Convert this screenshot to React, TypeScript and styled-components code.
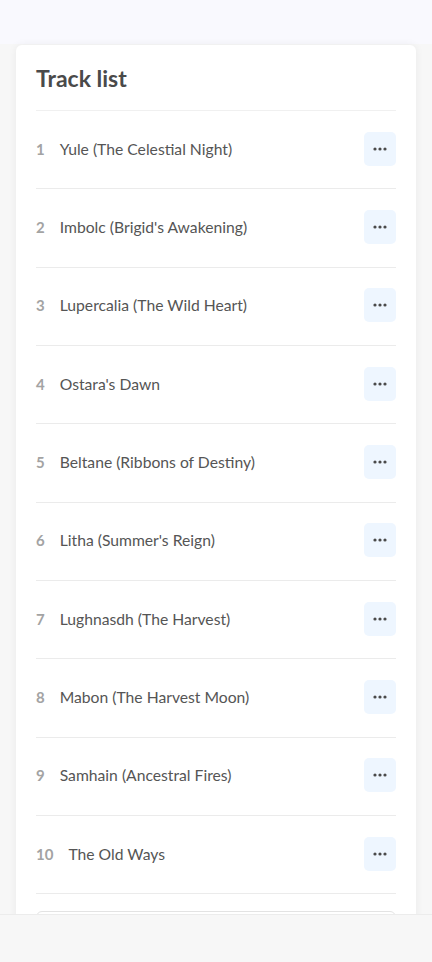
import React from 'react';
import styled, {createGlobalStyle} from "styled-components";

const tracks = [
	"Yule (The Celestial Night)",
	"Imbolc (Brigid's Awakening)",
	"Lupercalia (The Wild Heart)",
	"Ostara's Dawn",
	"Beltane (Ribbons of Destiny)",
	"Litha (Summer's Reign)",
	"Lughnasdh (The Harvest)",
	"Mabon (The Harvest Moon)",
	"Samhain (Ancestral Fires)",
	"The Old Ways",
];

function App() {
	return (
		<Page>
			<GlobalStyle/>
			<TopBand/>
			<Card>
				<Title>Track list</Title>
				<List>
					{tracks.map((name, i) => (
						<Row key={name}>
							<Num>{i + 1}</Num>
							<Name>{name}</Name>
							<MoreButton aria-label="More">
								<svg width="14" height="4" viewBox="0 0 14 4">
									<circle cx="2" cy="2" r="1.6" fill="#4a4a4a"/>
									<circle cx="7" cy="2" r="1.6" fill="#4a4a4a"/>
									<circle cx="12" cy="2" r="1.6" fill="#4a4a4a"/>
								</svg>
							</MoreButton>
						</Row>
					))}
				</List>
				<InputBox/>
			</Card>
			<BottomBar/>
		</Page>
	);
}

export default App;

const GlobalStyle = createGlobalStyle`
	body {
		margin: 0;
		background: #f7f7f7;
		font-family: Lato, "Open Sans", sans-serif;
	}
`

const Page = styled.div`
	min-height: 962px;
	background: #f7f7f7;
`

const TopBand = styled.div`
	height: 44px;
	background: #f9f9fe;
`

const Card = styled.div`
	margin: 1px 16px 0;
	background: #fff;
	border-radius: 6px;
	box-shadow: 0 0 8px rgba(0, 0, 0, 0.06);
	padding: 17px 20px 60px;
`

const Title = styled.h2`
	margin: 0;
	font-size: 23px;
	line-height: 32px;
	font-weight: 700;
	color: #4a4a4a;
	padding-bottom: 16px;
	border-bottom: 1px solid #f0f0f0;
`

const List = styled.div`
	display: flex;
	flex-direction: column;
`

const Row = styled.div`
	display: flex;
	align-items: center;
	height: 75.33px;
	padding-bottom: 2px;
	border-bottom: 1px solid #ebebeb;
	gap: 15px;
`

const Num = styled.span`
	font-size: 15px;
	font-weight: 700;
	color: #a3a3a3;
`

const Name = styled.span`
	flex: 1;
	font-size: 15.7px;
	color: #555;
`

const MoreButton = styled.button`
	width: 32px;
	height: 34px;
	border: none;
	border-radius: 5px;
	background: #eef6ff;
	display: flex;
	align-items: center;
	justify-content: center;
	padding: 0;
`

const InputBox = styled.div`
	margin-top: 17px;
	height: 40px;
	border: 1px solid #e3e3e3;
	border-radius: 6px;
`

const BottomBar = styled.div`
	position: fixed;
	left: 0;
	right: 0;
	bottom: 0;
	height: 47px;
	background: #f7f7f7;
	border-top: 1px solid #ececec;
`
